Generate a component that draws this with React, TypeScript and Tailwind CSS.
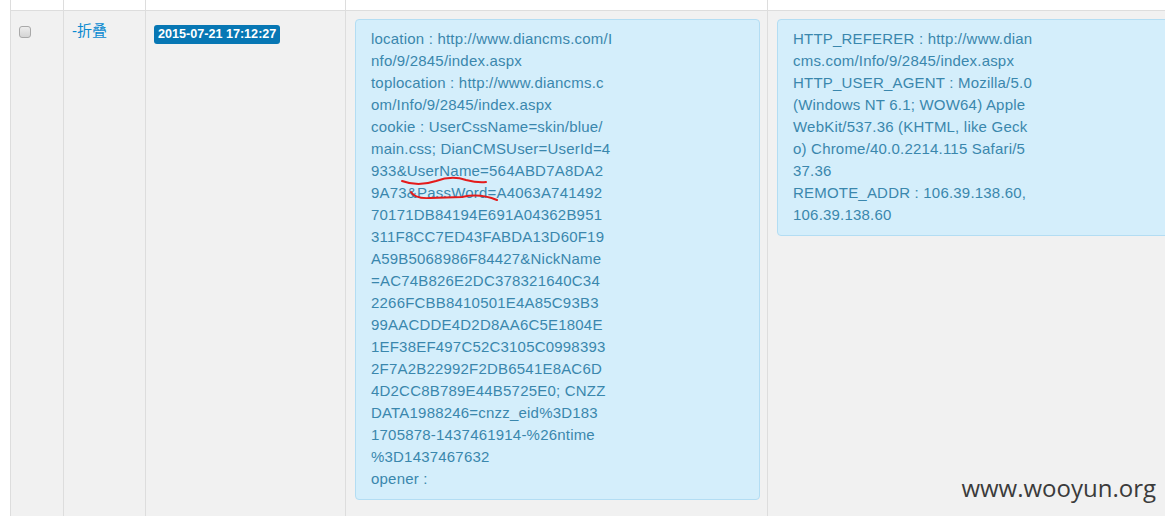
import React from "react";

const requestLines = [
  "location : http://www.diancms.com/I",
  "nfo/9/2845/index.aspx",
  "toplocation : http://www.diancms.c",
  "om/Info/9/2845/index.aspx",
  "cookie : UserCssName=skin/blue/",
  "main.css; DianCMSUser=UserId=4",
  "933&UserName=564ABD7A8DA2",
  "9A73&PassWord=A4063A741492",
  "70171DB84194E691A04362B951",
  "311F8CC7ED43FABDA13D60F19",
  "A59B5068986F84427&NickName",
  "=AC74B826E2DC378321640C34",
  "2266FCBB8410501E4A85C93B3",
  "99AACDDE4D2D8AA6C5E1804E",
  "1EF38EF497C52C3105C0998393",
  "2F7A2B22992F2DB6541E8AC6D",
  "4D2CC8B789E44B5725E0; CNZZ",
  "DATA1988246=cnzz_eid%3D183",
  "1705878-1437461914-%26ntime",
  "%3D1437467632",
  "opener :",
];

const headerLines = [
  "HTTP_REFERER : http://www.dian",
  "cms.com/Info/9/2845/index.aspx",
  "HTTP_USER_AGENT : Mozilla/5.0",
  "(Windows NT 6.1; WOW64) Apple",
  "WebKit/537.36 (KHTML, like Geck",
  "o) Chrome/40.0.2214.115 Safari/5",
  "37.36",
  "REMOTE_ADDR : 106.39.138.60,",
  "106.39.138.60",
];

function InfoBox({ lines }: { lines: string[] }) {
  return (
    <div className="rounded-[4px] border border-[#b3ddf3] bg-[#d4eefb] px-[15px] pt-[8px] pb-[9px] text-[15px] leading-[22px] tracking-[0.2px] text-[#3a87ad] whitespace-nowrap">
      {lines.map((line, i) => (
        <div key={i}>{line}</div>
      ))}
    </div>
  );
}

export default function App() {
  return (
    <div
      className="relative h-[516px] w-[1165px] overflow-hidden bg-white"
      style={{ fontFamily: '"Liberation Sans", Arial, sans-serif' }}
    >
      <div className="ml-[10px] w-[1200px]">
        {/* header strip */}
        <div className="grid h-[11px] grid-cols-[53px_82px_200px_422px_1fr] border-b border-[#dddddd] bg-white">
          <div className="border-l border-[#dddddd]" />
          <div className="border-l border-[#dddddd]" />
          <div className="border-l border-[#dddddd]" />
          <div className="border-l border-[#dddddd]" />
          <div className="border-l border-[#dddddd]" />
        </div>

        <div className="grid h-[520px] grid-cols-[53px_82px_200px_422px_1fr] bg-[#f1f1f1]">
          <div className="border-l border-[#dddddd] pl-[8px] pt-[15px]">
            <div className="h-[12px] w-[12px] rounded-[3px] border border-[#a9a9a9] bg-gradient-to-b from-[#ededed] to-[#d4d4d4]" />
          </div>
          <div className="border-l border-[#dddddd] pl-[8px] pt-[8px]">
            <span
              className="text-[15px] text-[#0a8ad0]"
              style={{ fontFamily: '"Liberation Sans", "Noto Sans CJK SC", sans-serif' }}
            >
              -折叠
            </span>
          </div>
          <div className="border-l border-[#dddddd] pl-[8px] pt-[10px]">
            <span className="inline-block h-[19px] rounded-[3px] bg-[#0777b4] px-[4px] text-[12.6px] leading-[19px] font-bold text-white">
              2015-07-21 17:12:27
            </span>
          </div>
          <div className="border-l border-[#dddddd] pl-[9px] pr-[7px] pt-[8px]">
            <InfoBox lines={requestLines} />
          </div>
          <div className="border-l border-[#dddddd] pl-[9px] pt-[8px]">
            <InfoBox lines={headerLines} />
          </div>
        </div>
      </div>

      {/* red hand-drawn marks */}
      <svg className="pointer-events-none absolute left-0 top-0" width="1165" height="516">
        <path
          d="M402 181 Q 418 187 436 181 Q 452 175 466 180 Q 478 183 486 182"
          fill="none"
          stroke="#e41b1b"
          strokeWidth="2"
          strokeLinecap="round"
        />
        <path
          d="M411 192 Q 415 199 430 198 L 462 197 Q 480 193 497 200"
          fill="none"
          stroke="#e41b1b"
          strokeWidth="2"
          strokeLinecap="round"
        />
      </svg>

      <div
        className="absolute right-[9px] top-[472px] text-[24px] leading-[32px] text-[#3b3b3b]"
        style={{ fontFamily: '"Open Sans", sans-serif' }}
      >
        www.wooyun.org
      </div>
    </div>
  );
}
